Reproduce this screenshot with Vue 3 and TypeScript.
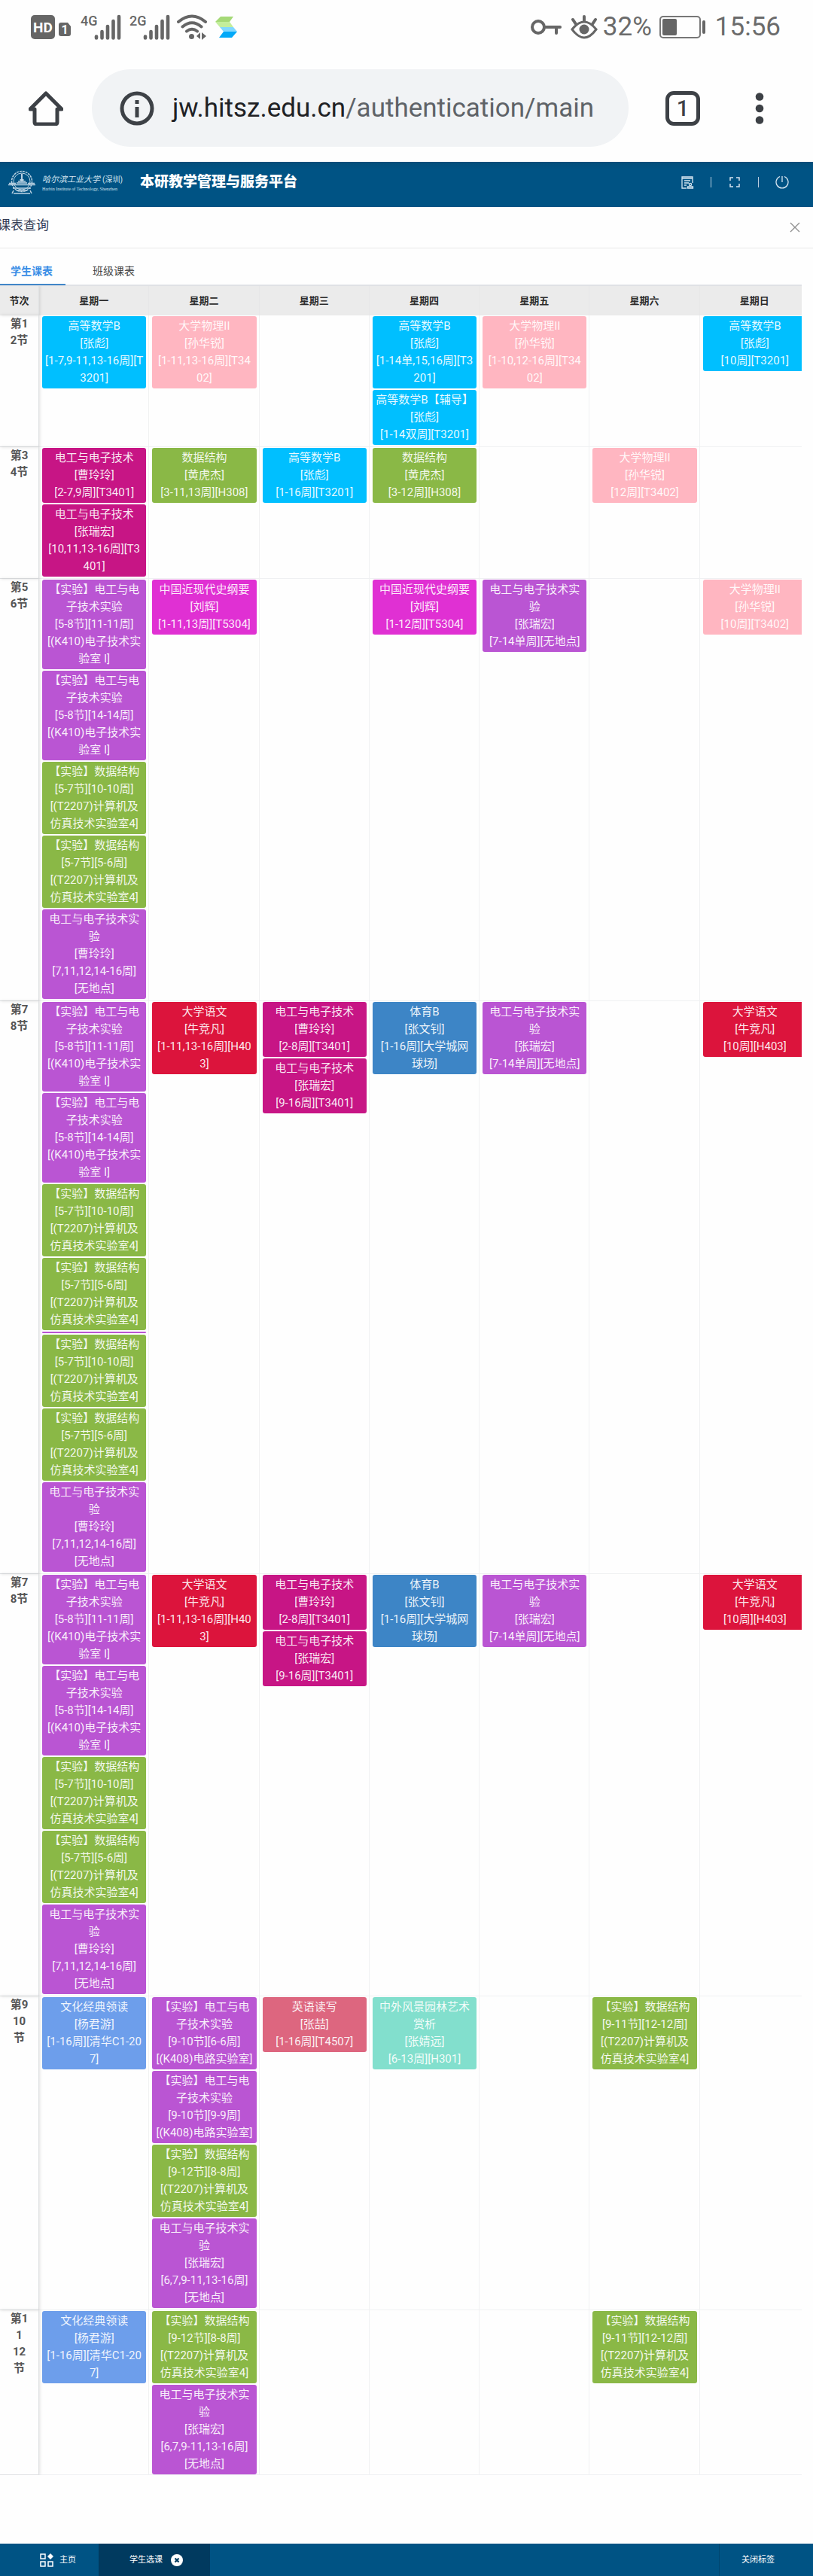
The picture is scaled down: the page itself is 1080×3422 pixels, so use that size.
<script setup lang="ts">
import { ref } from 'vue'

type Tone = 'sky' | 'pink' | 'plum' | 'green' | 'orchid' | 'magenta' | 'red' | 'blue' | 'soft' | 'rose' | 'mint' | 'sliver'

interface Course {
  tone: Tone
  text: string
}

interface Period {
  label: string
  days: Course[][]
}

const c = (tone: Tone, ...lines: string[]): Course => ({ tone, text: lines.join('\n') })

const weekdays = ['星期一', '星期二', '星期三', '星期四', '星期五', '星期六', '星期日']

const circuitLab = (weeks: string) =>
  c('orchid', '【实验】电工与电', '子技术实验', `[5-8节][${weeks}周]`, '[(K410)电子技术实', '验室 I]')
const dataLab = (slot: string, weeks: string) =>
  c('green', '【实验】数据结构', `[${slot}节][${weeks}周]`, '[(T2207)计算机及', '仿真技术实验室4]')
const roomLab = (weeks: string) =>
  c('orchid', '【实验】电工与电', '子技术实验', `[9-10节][${weeks}周]`, '[(K408)电路实验室]')
const caoLab = c('orchid', '电工与电子技术实', '验', '[曹玲玲]', '[7,11,12,14-16周]', '[无地点]')
const zhangLab = c('orchid', '电工与电子技术实', '验', '[张瑞宏]', '[6,7,9-11,13-16周]', '[无地点]')
const oddLab = c('orchid', '电工与电子技术实', '验', '[张瑞宏]', '[7-14单周][无地点]')
const classics = c('soft', '文化经典领读', '[杨君游]', '[1-16周][清华C1-20', '7]')

const afternoon = (): Course[][] => [
  [c('red', '大学语文', '[牛竞凡]', '[1-11,13-16周][H40', '3]')],
  [
    c('plum', '电工与电子技术', '[曹玲玲]', '[2-8周][T3401]'),
    c('plum', '电工与电子技术', '[张瑞宏]', '[9-16周][T3401]'),
  ],
  [c('blue', '体育B', '[张文钊]', '[1-16周][大学城网', '球场]')],
  [oddLab],
  [],
  [c('red', '大学语文', '[牛竞凡]', '[10周][H403]')],
]

const periods: Period[] = [
  {
    label: '第1\n2节',
    days: [
      [c('sky', '高等数学B', '[张彪]', '[1-7,9-11,13-16周][T', '3201]')],
      [c('pink', '大学物理II', '[孙华锐]', '[1-11,13-16周][T34', '02]')],
      [],
      [
        c('sky', '高等数学B', '[张彪]', '[1-14单,15,16周][T3', '201]'),
        c('sky', '高等数学B【辅导】', '[张彪]', '[1-14双周][T3201]'),
      ],
      [c('pink', '大学物理II', '[孙华锐]', '[1-10,12-16周][T34', '02]')],
      [],
      [c('sky', '高等数学B', '[张彪]', '[10周][T3201]')],
    ],
  },
  {
    label: '第3\n4节',
    days: [
      [
        c('plum', '电工与电子技术', '[曹玲玲]', '[2-7,9周][T3401]'),
        c('plum', '电工与电子技术', '[张瑞宏]', '[10,11,13-16周][T3', '401]'),
      ],
      [c('green', '数据结构', '[黄虎杰]', '[3-11,13周][H308]')],
      [c('sky', '高等数学B', '[张彪]', '[1-16周][T3201]')],
      [c('green', '数据结构', '[黄虎杰]', '[3-12周][H308]')],
      [],
      [c('pink', '大学物理II', '[孙华锐]', '[12周][T3402]')],
      [],
    ],
  },
  {
    label: '第5\n6节',
    days: [
      [circuitLab('11-11'), circuitLab('14-14'), dataLab('5-7', '10-10'), dataLab('5-7', '5-6'), caoLab],
      [c('magenta', '中国近现代史纲要', '[刘辉]', '[1-11,13周][T5304]')],
      [],
      [c('magenta', '中国近现代史纲要', '[刘辉]', '[1-12周][T5304]')],
      [oddLab],
      [],
      [c('pink', '大学物理II', '[孙华锐]', '[10周][T3402]')],
    ],
  },
  {
    label: '第7\n8节',
    days: [
      [
        circuitLab('11-11'),
        circuitLab('14-14'),
        dataLab('5-7', '10-10'),
        dataLab('5-7', '5-6'),
        c('sliver'),
        dataLab('5-7', '10-10'),
        dataLab('5-7', '5-6'),
        caoLab,
      ],
      ...afternoon(),
    ],
  },
  {
    label: '第7\n8节',
    days: [
      [circuitLab('11-11'), circuitLab('14-14'), dataLab('5-7', '10-10'), dataLab('5-7', '5-6'), caoLab],
      ...afternoon(),
    ],
  },
  {
    label: '第9\n10\n节',
    days: [
      [classics],
      [roomLab('6-6'), roomLab('9-9'), dataLab('9-12', '8-8'), zhangLab],
      [c('rose', '英语读写', '[张喆]', '[1-16周][T4507]')],
      [c('mint', '中外风景园林艺术', '赏析', '[张婧远]', '[6-13周][H301]')],
      [],
      [dataLab('9-11', '12-12')],
      [],
    ],
  },
  {
    label: '第1\n1\n12\n节',
    days: [
      [classics],
      [dataLab('9-12', '8-8'), zhangLab],
      [],
      [],
      [],
      [dataLab('9-11', '12-12')],
      [],
    ],
  },
]

const tabs = ['学生课表', '班级课表']
const activeTab = ref(0)
</script>

<template>
  <div class="page">
    <div class="status">
      <svg class="hd" width="54" height="32" viewBox="0 0 54 32" aria-hidden="true">
        <rect x="0" y="0" width="32" height="32" rx="5" fill="#666" />
        <text x="16" y="23" text-anchor="middle" font-size="19" font-weight="700" fill="#fff">HD</text>
        <path d="M40 10h9l4 5v10q0 3-3 3H40q-3 0-3-3V13q0-3 3-3z" fill="#666" />
        <text x="45" y="25" text-anchor="middle" font-size="16" font-weight="700" fill="#fff">1</text>
      </svg>
      <div v-for="net in ['4G', '2G']" :key="net" class="signal">
        <span class="net">{{ net }}</span>
        <svg width="36" height="34" viewBox="0 0 36 34" stroke="#666" stroke-width="4.6" stroke-linecap="round" aria-hidden="true">
          <path d="M3 29.5v2M10.5 23v8.500M18 16v15.500M25.500 9v22.500M33 3v28.500" />
        </svg>
      </div>
      <svg class="wifi" width="40" height="34" viewBox="0 0 40 34" fill="none" stroke="#666" stroke-width="4" stroke-linecap="round" aria-hidden="true">
        <path d="M2 10Q20-5 38 10M7.500 16.500Q20 6 32.500 16.500M13 22.500Q20 17 27 22.500" />
        <circle cx="19.500" cy="29.500" r="3.500" fill="#666" stroke="none" />
        <path d="M31 24v9l-5-4zM33 24l6 5-6 5z" fill="#666" stroke="none" />
      </svg>
      <svg width="30" height="28" viewBox="0 0 30 28" aria-hidden="true">
        <path d="M7 0h17l-5 7H0z" fill="#a5d977" />
        <path d="M0 7h19l5 7H6z" fill="#c3ee9c" />
        <path d="M6 14h18l5 6H11z" fill="#80d8ff" />
        <path d="M11 20h18l-7 8H5z" fill="#03a9f8" />
      </svg>
      <span class="spacer"></span>
      <svg class="key" width="42" height="20" viewBox="0 0 42 20" fill="none" stroke="#666" stroke-width="4" aria-hidden="true">
        <circle cx="10" cy="10" r="8" />
        <path d="M18 10h21M34 10v8" stroke-linecap="round" />
      </svg>
      <svg class="eye" width="36" height="32" viewBox="0 0 36 32" fill="none" stroke="#666" stroke-width="3" stroke-linecap="round" aria-hidden="true">
        <path d="M2 19Q18-1 34 19Q18 41 2 19z" />
        <circle cx="18" cy="19" r="6.500" fill="#666" stroke="none" />
        <path d="M18 2v6M3 6l4 6M33 6l-4 6" stroke-width="4" />
      </svg>
      <span class="reading">32%</span>
      <svg class="battery" width="62" height="30" viewBox="0 0 62 30" aria-hidden="true">
        <rect x="1" y="1" width="53" height="28" rx="4" fill="none" stroke="#777" stroke-width="2" />
        <rect x="4" y="4" width="19" height="22" rx="2" fill="#666" />
        <rect x="57" y="6" width="4" height="18" rx="2" fill="#666" />
      </svg>
      <time class="reading">15:56</time>
    </div>

    <div class="toolbar">
      <button type="button" class="plain" aria-label="主页">
        <svg width="46" height="46" viewBox="0 0 46 46" fill="none" stroke="#3d4146" stroke-width="5" aria-hidden="true">
          <path d="M2 24h6v17q0 3 3 3h24q3 0 3-3V24h6L23 3z" stroke-linejoin="round" />
        </svg>
      </button>
      <button type="button" class="omnibox">
        <svg width="46" height="46" viewBox="0 0 46 46" aria-hidden="true">
          <circle cx="23" cy="23" r="20" fill="none" stroke="#3d4146" stroke-width="5" />
          <path d="M20.500 12h5v5h-5zM20.500 21h5v14h-5z" fill="#3d4146" />
        </svg>
        <span class="url">jw.hitsz.edu.cn<span class="path">/authentication/main</span></span>
      </button>
      <button type="button" class="tabcount">1</button>
      <button type="button" class="plain" aria-label="菜单">
        <svg width="12" height="46" viewBox="0 0 12 46" fill="#3d4146" aria-hidden="true">
          <circle cx="6" cy="7.500" r="5.300" /><circle cx="6" cy="23" r="5.300" /><circle cx="6" cy="38.500" r="5.300" />
        </svg>
      </button>
    </div>

    <header class="banner">
      <svg class="emblem" width="36" height="32" viewBox="0 0 36 32" fill="none" stroke="#bcd3e3" aria-hidden="true">
        <circle cx="18" cy="15" r="13.500" stroke-width="1.500" stroke-dasharray="3 1" />
        <circle cx="18" cy="15" r="11" stroke-width="1" />
        <path d="M0 19.500h36M1 17.500h9M26 17.500h9M11 17h14M13 15h10" stroke-width="1.500" />
        <path d="M15.500 13h5M18 5v10" stroke-width="2" />
        <path d="M6 24h24M11 27h14M5 31l2-4M31 31l-2-4M7 31h22" stroke-width="1.500" />
      </svg>
      <div class="school">
        <div class="school-cn"><i>哈尔滨工业大学</i><span>(深圳)</span></div>
        <div class="school-en">Harbin Institute of Technology, Shenzhen</div>
      </div>
      <h1>本研教学管理与服务平台</h1>
      <span class="spacer"></span>
      <nav class="tools">
        <button type="button" class="plain" aria-label="通知">
          <svg width="18" height="18" viewBox="0 0 18 18" fill="none" stroke="#d5e5f0" stroke-width="1.300" aria-hidden="true">
            <path d="M8 17H2V2h14v8M2 4h14M5 7h8M5 10h6M5 13h3" />
            <circle cx="13" cy="12" r="1.600" /><path d="M9.500 17v-2h7v2z" />
          </svg>
        </button>
        <i class="bar"></i>
        <button type="button" class="plain" aria-label="全屏">
          <svg width="18" height="18" viewBox="0 0 18 18" fill="none" stroke="#d5e5f0" stroke-width="1.500" aria-hidden="true">
            <path d="M3 7V3h4M11 3h4v4M15 11v4h-4M7 15H3v-4" />
          </svg>
        </button>
        <i class="bar"></i>
        <button type="button" class="plain" aria-label="退出">
          <svg width="18" height="18" viewBox="0 0 18 18" fill="none" stroke="#d5e5f0" stroke-width="1.300" aria-hidden="true">
            <path d="M6 1.500a8 8 0 1 0 6 0M9 1v8" />
          </svg>
        </button>
      </nav>
    </header>

    <div class="titlebar">
      <h2>课表查询</h2>
      <button type="button" class="plain" aria-label="关闭">
        <svg width="14" height="14" viewBox="0 0 14 14" stroke="#8e8e8e" stroke-width="1.300" aria-hidden="true">
          <path d="M1 1l12 12M13 1L1 13" />
        </svg>
      </button>
    </div>

    <main>
      <div class="tabs" role="tablist">
        <button
          v-for="(tab, i) in tabs"
          :key="tab"
          type="button"
          role="tab"
          :aria-selected="activeTab === i"
          :class="{ active: activeTab === i }"
          @click="activeTab = i"
        >{{ tab }}</button>
      </div>

      <div class="scroller">
        <table>
          <thead>
            <tr>
              <th scope="col" class="first">节次</th>
              <th v-for="day in weekdays" :key="day" scope="col">{{ day }}</th>
            </tr>
          </thead>
          <tbody>
            <tr v-for="(period, p) in periods" :key="p">
              <th scope="row" class="first">{{ period.label }}</th>
              <td v-for="(courses, d) in period.days" :key="d">
                <div v-for="(course, k) in courses" :key="k" class="card" :class="course.tone">{{ course.text }}</div>
              </td>
            </tr>
          </tbody>
        </table>
      </div>
    </main>

    <footer>
      <button type="button" class="home">
        <svg width="18" height="18" viewBox="0 0 18 18" fill="none" stroke="#fff" stroke-width="1.500" aria-hidden="true">
          <path d="M1 1h6v6H1zM1 11h6v6H1zM11 11h6v6h-6z" />
          <path d="M14 0l4 4-4 4-4-4z" fill="#fff" stroke="none" />
        </svg>
        主页
      </button>
      <button type="button" class="current">
        学生选课
        <svg width="16" height="16" viewBox="0 0 16 16" aria-hidden="true">
          <circle cx="8" cy="8" r="8" fill="#fff" />
          <path d="M5.500 5.500l5 5M10.500 5.500l-5 5" stroke="#013a5f" stroke-width="2.200" />
        </svg>
      </button>
      <span class="spacer"></span>
      <button type="button" class="closeall">关闭标签</button>
    </footer>
  </div>
</template>

<style>
body {
  background: #fefefe;
}
</style>

<style scoped>
.page {
  font-family: Roboto, "Noto Sans CJK SC", sans-serif;
  overflow: hidden;
}

button {
  font-family: inherit;
  border: 0;
  margin: 0;
  padding: 0;
  background: none;
}

svg,
.plain {
  display: block;
  flex: none;
}

.spacer {
  flex: 1;
}

.status {
  display: flex;
  align-items: center;
  height: 72px;
  padding: 0 43px 0 41px;
}

.signal {
  display: flex;
  align-items: flex-start;
  margin-left: 12px;
}

.net {
  width: 18px;
  font-size: 18px;
  line-height: 18px;
  font-weight: 500;
  color: #666;
}

.signal + .signal {
  margin-left: 11px;
}

.wifi {
  margin: 0 11px 0 9px;
}

.eye {
  margin: 0 7px 0 11px;
}

.battery {
  margin: 0 12px 0 10px;
}

.reading {
  font-size: 35px;
  line-height: 40px;
  color: #6b6b6b;
}

.toolbar {
  display: flex;
  align-items: center;
  padding: 20px 65px 20px 38px;
}

.omnibox {
  flex: 1;
  display: flex;
  align-items: center;
  height: 103px;
  margin: 0 49px 0 38px;
  padding-left: 37px;
  border-radius: 52px;
  background: #f1f3f5;
}

.url {
  margin-left: 24px;
  font-size: 35px;
  line-height: 44px;
  color: #202124;
}

.path {
  color: #5f6368;
}

.tabcount {
  box-sizing: border-box;
  width: 46px;
  height: 46px;
  margin-right: 73px;
  border: 5px solid #3d4146;
  border-radius: 11px;
  font-size: 29px;
  line-height: 36px;
  font-weight: 500;
  color: #3d4146;
}

.banner {
  display: flex;
  align-items: center;
  height: 60px;
  box-sizing: border-box;
  padding: 0 32px 6px 11px;
  background: linear-gradient(#044e7a, #005384 10px);
  color: #fff;
}

.school {
  margin: 2px 23px 0 9px;
  width: 107px;
  white-space: nowrap;
  color: #d5e5f0;
}

.school-cn {
  display: flex;
  justify-content: space-between;
  font-size: 11px;
  line-height: 16px;
}

.school-cn span {
  font-size: 10px;
}

.school-en {
  font-family: "Liberation Serif", serif;
  font-size: 6px;
  line-height: 8px;
}

h1 {
  margin: 0;
  font-size: 19px;
  line-height: 28px;
  font-weight: 900;
}

.tools {
  display: flex;
  align-items: center;
  gap: 22px;
}

.bar {
  width: 1px;
  height: 14px;
  background: #b9d0e0;
}

.titlebar {
  display: flex;
  align-items: center;
  justify-content: space-between;
  height: 54px;
  padding-right: 17px;
  border-bottom: 1px solid #e8e8e8;
}

h2 {
  margin: 0 0 6px -3px;
  font-size: 17px;
  line-height: 24px;
  font-weight: 400;
  color: #323a52;
}

main {
  padding: 0 15px 91px 0;
}

.tabs {
  display: flex;
  height: 48px;
  border-bottom: 2px solid #dfe1e5;
}

.tabs button {
  height: 49px;
  box-sizing: border-box;
  padding: 10px 17px 0 14px;
  border-bottom: 2px solid transparent;
  font-size: 14px;
  color: #444;
}

.tabs button + button {
  margin-left: 22px;
}

.tabs .active {
  border-color: #4186c8;
  font-weight: 700;
  color: #3a8ee6;
}

.scroller {
  overflow: hidden;
}

table {
  width: calc(100% + 11px);
  table-layout: fixed;
  border-collapse: separate;
  border-spacing: 0;
}

th,
td {
  box-sizing: border-box;
  vertical-align: top;
  border-right: 1px solid #f0f1f2;
}

thead th {
  height: 39px;
  padding: 0;
  vertical-align: middle;
  font-size: 13px;
  line-height: 20px;
  font-weight: 700;
  color: #2b2b2b;
  background: #ebebeb;
  border-color: #e7e7e8;
}

.first {
  position: relative;
  width: 52px;
  border-color: #dfe1e3;
  box-shadow: 1px 0 4px rgba(0, 0, 0, 0.12);
}

tbody .first {
  padding: 0;
  font-size: 15px;
  line-height: 22px;
  font-weight: 700;
  white-space: pre;
  color: #555;
}

tbody th,
td {
  border-bottom: 1px solid #eff0f2;
}

td {
  padding: 1px 3px 0 4px;
}

.card {
  margin-bottom: 2px;
  padding: 2px 0;
  border-radius: 3px;
  font-size: 15px;
  line-height: 23px;
  text-align: center;
  white-space: pre;
  color: rgba(255, 255, 255, 0.92);
}

tr:last-child .card:last-child {
  margin-bottom: 0;
}

.sky { background: #00bfff; }
.pink { background: #ffb6c1; }
.plum { background: #c71585; }
.green { background: #8ab846; }
.orchid { background: #ba55d3; }
.magenta { background: #e030d3; }
.red { background: #dc143c; }
.blue { background: #3d85c6; }
.soft { background: #6d9eeb; }
.rose { background: #dd667f; }
.mint { background: #82dfcd; }

.sliver {
  height: 2px;
  padding: 0;
  border-radius: 1px;
  background: #ba55d3;
}

footer {
  display: flex;
  height: 43px;
  background: #005384;
}

footer button {
  display: flex;
  align-items: center;
  font-size: 11px;
  line-height: 16px;
  color: #fff;
}

.home {
  width: 131px;
  padding-left: 53px;
  gap: 8px;
}

.current {
  width: 148px;
  padding-left: 41px;
  gap: 11px;
  background: #013a5f;
}

.closeall {
  width: 125px;
  padding-left: 29px;
  border-left: 1px solid #01466f;
}
</style>
